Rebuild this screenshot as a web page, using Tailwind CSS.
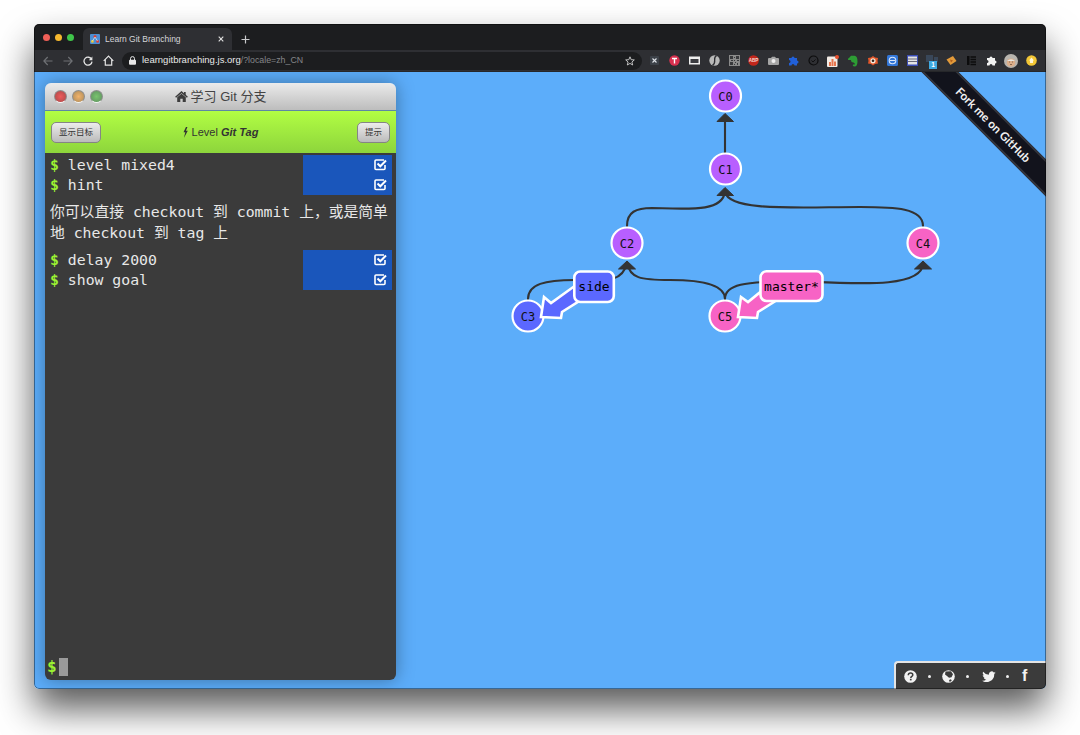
<!DOCTYPE html>
<html lang="zh">
<head>
<meta charset="UTF-8">
<title>Learn Git Branching</title>
<script src="https://cdn.jsdelivr.net/npm/@tailwindcss/browser@4"></script>
</head>
<body class="bg-white w-[1080px] h-[735px] overflow-hidden pl-[34px] pt-[24px] font-['Liberation_Sans','Noto_Sans_CJK_SC',sans-serif]">

<div class="w-[1012px] h-[665px] rounded-[5px] overflow-hidden flex flex-col relative">
  <!-- tab strip -->
  <div class="h-[26px] bg-[#1c1d1f] flex items-end shrink-0 relative">
    <div class="flex gap-[5px] pl-[9px] w-[49px] h-[25px] items-center">
      <span class="w-[7px] h-[7px] rounded-full bg-[#ee5f57] shrink-0"></span>
      <span class="w-[7px] h-[7px] rounded-full bg-[#f5b82e] shrink-0"></span>
      <span class="w-[7px] h-[7px] rounded-full bg-[#3fc54a] shrink-0"></span>
    </div>
    <div class="w-[149px] h-[22px] bg-[#2e2f33] rounded-t-[6px] flex items-center pl-[7px] pr-[8px]">
      <svg class="w-[10px] h-[10px] shrink-0" viewBox="0 0 10 10"><rect width="10" height="10" rx="1" fill="#4d8fd6"/><circle cx="5" cy="2.5" r="1.5" fill="#d8413a"/><circle cx="2.4" cy="7.4" r="1.4" fill="#e8c83a"/><circle cx="7.6" cy="7.4" r="1.4" fill="#d8413a"/><path d="M5 3 2.5 7M5 3l2.5 4" stroke="#fff" stroke-width=".6"/></svg>
      <span class="ml-[5px] text-[8.5px] text-[#d5d6d8] flex-1 whitespace-nowrap">Learn Git Branching</span>
      <svg class="w-[6px] h-[6px]" viewBox="0 0 6 6"><path d="M.7.7l4.6 4.6M5.3.7.7 5.3" stroke="#e2e2e2" stroke-width="1.1"/></svg>
    </div>
    <svg class="w-[9px] h-[9px] ml-[9px] mb-[6px]" viewBox="0 0 9 9"><path d="M4.5.5v8M.5 4.5h8" stroke="#c9cacc" stroke-width="1.2"/></svg>
  </div>

  <!-- toolbar -->
  <div class="h-[22px] bg-[#2e2f33] border-b border-b-[#26272a] flex items-center shrink-0">
    <div class="flex items-center w-[88px] pl-[9px] gap-[10px]">
      <svg class="w-[10px] h-[10px] shrink-0" viewBox="0 0 10 10" fill="none" stroke="#6e7074" stroke-width="1.2"><path d="M9.5 5H1M4.7 1 .9 5l3.8 4"/></svg>
      <svg class="w-[10px] h-[10px] shrink-0" viewBox="0 0 10 10" fill="none" stroke="#6e7074" stroke-width="1.2"><path d="M.5 5H9M5.3 1l3.8 4-3.8 4"/></svg>
      <svg class="w-[10px] h-[10px] shrink-0" viewBox="0 0 10 10" fill="none" stroke="#e4e4e4" stroke-width="1.3"><path d="M8.6 3.4A4 4 0 1 0 9 5.6"/><path d="M9.4.6v3.6H5.8z" fill="#e4e4e4" stroke="none"/></svg>
      <svg class="w-[11px] h-[11px] shrink-0" viewBox="0 0 11 11" fill="none" stroke="#e4e4e4" stroke-width="1.2"><path d="M.7 5.8 5.500 1l4.800 4.800M2.300 4.600v5.600h6.400V4.600"/></svg>
    </div>
    <div class="w-[520px] h-[18px] rounded-full bg-[#1c1d1f] flex items-center pl-[7px] pr-[7px]">
      <svg class="w-[7px] h-[9px] shrink-0" viewBox="0 0 7 9"><path d="M1.500 4V2.600a2 2 0 0 1 4 0V4" fill="none" stroke="#e6e6e6"/><rect y="3.800" width="7" height="5" rx="1" fill="#e6e6e6"/></svg>
      <span class="ml-[6px] text-[9.500px] text-[#e8e8e8] flex-1 whitespace-nowrap font-medium">learngitbranching.js.org<span class="text-[#85878a] font-normal text-[8.800px]">/?locale=zh_CN</span></span>
      <svg class="w-[10px] h-[10px] shrink-0" viewBox="0 0 10 10" fill="none" stroke="#d0d0d0" stroke-width=".9"><path d="M5 .8 6.200 3.700l3.100.2L6.900 6l.8 3L5 7.400 2.300 9l.8-3L.7 3.900l3.100-.2z"/></svg>
    </div>
    <!-- extension icons -->
    <div class="flex items-center ml-[3px]">
      <div class="w-[19.8px] flex justify-center"><svg class="w-[11px] h-[11px]" viewBox="0 0 11 11"><rect x="1" y="1" width="9" height="9" rx="1" fill="#3c4148"/><path d="M3.500 3.500l4 4M7.500 3.500l-4 4" stroke="#dfe3e8" stroke-width="1.100"/></svg></div>
      <div class="w-[19.8px] flex justify-center"><svg class="w-[11px] h-[11px]" viewBox="0 0 11 11"><circle cx="5.500" cy="5.500" r="5.200" fill="#d9304f"/><path d="M3 3.500h5M5.500 3.500v5" stroke="#fff" stroke-width="1.400"/></svg></div>
      <div class="w-[19.8px] flex justify-center"><svg class="w-[11px] h-[11px]" viewBox="0 0 11 11"><rect y="1.500" width="11" height="8" fill="#eee"/><rect x="1.500" y="4" width="8" height="4" fill="#3a3b40"/></svg></div>
      <div class="w-[19.8px] flex justify-center"><svg class="w-[11px] h-[11px]" viewBox="0 0 11 11"><circle cx="5.500" cy="5.500" r="5.200" fill="#b9b9b9"/><path d="M7.500.6C3 3 8.500 7 3.500 10.400" fill="none" stroke="#2e2f33" stroke-width="1.300"/></svg></div>
      <div class="w-[19.8px] flex justify-center"><svg class="w-[11px] h-[11px]" viewBox="0 0 11 11"><rect width="11" height="11" fill="#8a8a8a"/><path d="M1 1h3v3H1zM7 1h3v3H7zM1 7h3v3H1zM5 5h1v1H5zM6 7h1v1H6zM8 8h1v2H8zM5 2h1v1H5zM2 5h2v1H2zM8 5h2v1H8zM5 9h1v1H5z" fill="#38393c"/></svg></div>
      <div class="w-[19.8px] flex justify-center"><svg class="w-[11px] h-[11px]" viewBox="0 0 11 11"><circle cx="5.500" cy="5.500" r="5.300" fill="#c2261b"/><text x="5.500" y="7.300" text-anchor="middle" font-size="4.600" font-weight="700" fill="#f6d6d2">ABP</text></svg></div>
      <div class="w-[19.8px] flex justify-center"><svg class="w-[11px] h-[11px]" viewBox="0 0 11 11"><path d="M1 3h2l1-1.200h3L8 3h2a1 1 0 0 1 1 1v5a1 1 0 0 1-1 1H1a1 1 0 0 1-1-1V4a1 1 0 0 1 1-1z" fill="#a5a5a5"/><circle cx="5.500" cy="6" r="2" fill="#eee"/></svg></div>
      <div class="w-[19.8px] flex justify-center"><svg class="w-[11px] h-[11px]" viewBox="0 0 11 11"><path d="M1 3h2.500a1.500 1.500 0 1 1 3 0H9v2.500a1.500 1.500 0 1 1 0 3V10.500H6.500a1.500 1.500 0 0 0-3 0H1V8a1.500 1.500 0 1 0 0-3z" fill="#2160d8"/></svg></div>
      <div class="w-[19.8px] flex justify-center"><svg class="w-[11px] h-[11px]" viewBox="0 0 11 11" fill="none" stroke="#0c0c0d" stroke-width="1.200"><circle cx="5.500" cy="5.500" r="4.500"/><path d="M3.500 5.500l1.500 1.500 2.500-2.500" stroke-width=".9"/></svg></div>
      <div class="w-[19.8px] flex justify-center"><svg class="w-[12px] h-[12px]" viewBox="0 0 12 12"><rect y="1.500" width="10.500" height="10.500" rx="1" fill="#f3ece6"/><path d="M2 11V7h2v4zM4.500 11V4h2v7zM7 11V6.500h2V11z" fill="#e8764e"/><circle cx="10" cy="2" r="2" fill="#e9502f"/></svg></div>
      <div class="w-[19.8px] flex justify-center"><svg class="w-[11px] h-[12px]" viewBox="0 0 11 12"><path d="M2 3 4 .8h3.500C9.500.8 10.500 3 10.500 6.500c0 3-1 5-3 5-1.500 0-2-1-1.500-2H7.500C8 9.500 8 8 6.500 7.500 4.500 7.500 4 6.500 4 5H1.500C.8 5 .5 3.500 2 3z" fill="#2d9c34"/></svg></div>
      <div class="w-[19.8px] flex justify-center"><svg class="w-[12px] h-[11px]" viewBox="0 0 12 11"><path d="M6 1 8 2.500l3 .5-.5 3 .5 2.500-3 .5L6 10.500 4 9 1 8.500l.5-2.500L1 3l3-.5z" fill="#e4572a"/><circle cx="6" cy="5.800" r="2.600" fill="#f4e9dc"/><circle cx="6" cy="5.800" r="1.300" fill="#33261f"/></svg></div>
      <div class="w-[19.8px] flex justify-center"><svg class="w-[11px] h-[11px]" viewBox="0 0 11 11"><rect width="11" height="11" rx="1.500" fill="#3276d8"/><circle cx="5.500" cy="5.500" r="3.300" fill="none" stroke="#dbe8fb" stroke-width="1.100"/><path d="M3 5.500h5" stroke="#dbe8fb"/></svg></div>
      <div class="w-[19.8px] flex justify-center"><svg class="w-[11px] h-[11px]" viewBox="0 0 11 11"><rect width="11" height="11" fill="#3b4db5"/><rect x="1" y="1.500" width="9" height="8" fill="#e4e4e4"/><path d="M1 4h9M1 6.500h9" stroke="#6a6a78"/></svg></div>
      <div class="w-[19.8px] flex justify-center relative"><svg class="w-[12px] h-[8px] -translate-y-[2px]" viewBox="0 0 12 8"><rect width="7" height="7" fill="#394759"/><rect x="8" y="2" width="4" height="5" fill="#394759"/></svg><span class="absolute top-[4px] left-[7px] w-[8px] h-[8px] bg-[#3fa9e0] text-white text-[6.500px] leading-[8px] text-center font-bold">1</span></div>
      <div class="w-[19.8px] flex justify-center"><svg class="w-[11px] h-[11px]" viewBox="0 0 11 11"><path d="M.5 4.500 7 1l3.500 5-6 4z" fill="#e29a3a"/><path d="M4 4.500l3 1-2 2z" fill="#b35f1d"/></svg></div>
      <div class="w-[19.8px] flex justify-center"><svg class="w-[11px] h-[11px]" viewBox="0 0 11 11"><rect x="1" y="1" width="2.500" height="9" fill="#0c0c0d"/><path d="M4.500 2h5.500M4.500 4.500h5.500M4.500 7h5.500M4.500 9.500h5.500" stroke="#0c0c0d" stroke-width="1.400"/></svg></div>
      <div class="w-[19.8px] flex justify-center"><svg class="w-[11px] h-[11px]" viewBox="0 0 11 11"><path d="M1 3h2.500a1.500 1.500 0 1 1 3 0H9v2.500a1.500 1.500 0 1 1 0 3V10.500H6.500a1.500 1.500 0 0 0-3 0H1V8a1.500 1.500 0 1 0 0-3z" fill="#f2f2f2"/></svg></div>
      <div class="w-[19.8px] flex justify-center"><svg class="w-[14px] h-[14px]" viewBox="0 0 14 14"><circle cx="7" cy="7" r="7" fill="#b8b4ae"/><ellipse cx="7" cy="8.500" rx="4.200" ry="4" fill="#dcae8a"/><path d="M3 7q4-3.500 8 0" fill="#e9e6e0"/><path d="M5 8h1M8 8h1M6 10.500h2" stroke="#6b4a35" stroke-width=".7"/></svg></div>
      <div class="w-[19.8px] flex justify-center"><svg class="w-[11px] h-[11px]" viewBox="0 0 11 11"><circle cx="5.500" cy="5.500" r="5.300" fill="#f3c736"/><path d="M5.500 2.500 8 5.500H7v2.500H4V5.500H3z" fill="#fff6d8"/></svg></div>
    </div>
  </div>

  <!-- page -->
  <div class="flex-1 bg-[#5cadfa] relative overflow-hidden">

    <!-- graph -->
    <svg class="absolute inset-0 w-[1012px] h-[617px] font-['DejaVu_Sans_Mono',monospace]" viewBox="34 72 1012 617" fill="none">
      <g stroke="#333" stroke-width="2.100" stroke-linecap="round">
        <path d="M725 153V120"/>
        <path d="M627 226C627 212 636 208 652 208C690 209 722 212 725 192"/>
        <path d="M923 226C923 208 895 207 860 207C800 207 729 212 725 192"/>
        <path d="M725 299C725 284 700 280 670 280C640 280 630 278 627 263"/>
        <path d="M725 299C725 284 745 282 790 281C850 283 923 290 923 263"/>
        <path d="M528 299C528 284 545 280 575 280C600 280 622 285 627 263"/>
      </g>
      <g fill="#333" stroke="#333" stroke-linejoin="round">
        <path d="M725 113.500 733.500 121.500H717Z"/>
        <path d="M725 187.500 733.500 195.500H717Z"/>
        <path d="M627 261 635.500 269H618.500Z"/>
        <path d="M923 261 931.500 269H914.500Z"/>
      </g>

      <g stroke="#fff" stroke-width="2.200">
        <circle cx="725.500" cy="96" r="15.500" fill="#b85fff"/>
        <circle cx="725.500" cy="169" r="15.500" fill="#b85fff"/>
        <circle cx="627" cy="243" r="15.500" fill="#b85fff"/>
        <circle cx="528" cy="316" r="15.500" fill="#5b68ff"/>
        <circle cx="923" cy="243" r="15.500" fill="#f763c5"/>
        <circle cx="725" cy="316" r="15.500" fill="#f763c5"/>
      </g>
      <g fill="#111" font-size="12" text-anchor="middle">
        <text x="725.500" y="100.500">C0</text>
        <text x="725.500" y="173.500">C1</text>
        <text x="627" y="247.500">C2</text>
        <text x="528" y="320.500">C3</text>
        <text x="923" y="247.500">C4</text>
        <text x="725" y="320.500">C5</text>
      </g>

      <path d="M541 317 544 297 551 303 576 285 584 298 562 312 561 318Z" fill="#5b68ff" stroke="#fff" stroke-width="2.600"/>
      <rect x="574.300" y="271.500" width="39.500" height="30.500" rx="6" fill="#5b68ff" stroke="#fff" stroke-width="2.600"/>
      <text x="594" y="291" fill="#000" font-size="13" text-anchor="middle">side</text>

      <path d="M738 317 741 297 748 302 764 289 774 302 758 312 757 318Z" fill="#f763c5" stroke="#fff" stroke-width="2.600"/>
      <rect x="760.500" y="271.300" width="62" height="29.700" rx="6" fill="#f763c5" stroke="#fff" stroke-width="2.600"/>
      <text x="791.500" y="291" fill="#000" font-size="13" text-anchor="middle">master*</text>
    </svg>

    <!-- github ribbon -->
    <div class="absolute top-0 right-0 w-[150px] h-[150px] overflow-hidden">
      <div class="absolute top-[40px] right-[-57px] w-[220px] h-[26px] rotate-45 bg-[#12131c] border-y-2 border-y-[#33343b] flex items-center justify-center text-[#f0f0f0] text-[11.800px] font-bold font-['Lato',sans-serif] whitespace-nowrap">Fork me on GitHub</div>
    </div>

    <!-- command panel -->
    <div class="relative m-[11px] w-[351px] h-[597px] rounded-[6px] flex flex-col shadow-[0_0_18px_rgba(0,0,0,0.35)] overflow-hidden">
      <div class="h-[28px] shrink-0 bg-gradient-to-b from-[#ebebeb] to-[#bdbdbd] border-b border-b-[#5e87a5] flex items-center relative">
        <div class="flex gap-[5px] pl-[9px]">
          <span class="w-[13px] h-[13px] rounded-full bg-radial from-[#ee5a5a] to-[#a84a4a] border border-[#8d8d8d] border-b-[#f4f4f4]"></span>
          <span class="w-[13px] h-[13px] rounded-full bg-radial from-[#f2b26a] to-[#a98a5a] border border-[#8d8d8d] border-b-[#f4f4f4]"></span>
          <span class="w-[13px] h-[13px] rounded-full bg-radial from-[#79c46e] to-[#5f8f5f] border border-[#8d8d8d] border-b-[#f4f4f4]"></span>
        </div>
        <div class="absolute inset-0 flex items-center justify-center gap-[3px] text-[13px] text-[#444]">
          <svg class="w-[13px] h-[11px]" viewBox="0 0 13 11"><path d="M.6 6.200 6.500 1.100l5.900 5.100" fill="none" stroke="#3d3d3d" stroke-width="1.500"/><path d="M2.200 6.300 6.500 2.800l4.300 3.500V11H7.700V7.800H5.300V11H2.200z" fill="#3d3d3d"/><rect x="9" y="1" width="1.700" height="3" fill="#3d3d3d"/></svg>
          <span>学习 Git 分支</span>
        </div>
      </div>
      <div class="h-[42px] shrink-0 bg-gradient-to-b from-[#b2fe43] to-[#8dd53c] flex items-center justify-between pl-[6px] pr-[6px] relative">
        <button class="w-[50px] h-[21px] rounded-[5px] border-[1.500px] border-[#858585] bg-gradient-to-b from-[#ececec] to-[#bbb] text-[8.500px] text-[#333]">显示目标</button>
        <div class="absolute inset-0 flex items-center justify-center text-[11px] text-[#333]">
          <svg class="w-[5px] h-[11px] mr-[4px]" viewBox="0 0 5 11"><path d="M3-.1.500 5.300H2.300L.9 10.900 4.800 3.800H2.900L4.500-.1z" fill="#333"/></svg>
          <span>Level&nbsp;<b class="italic">Git Tag</b></span>
        </div>
        <button class="w-[33px] h-[21px] rounded-[5px] border-[1.500px] border-[#858585] bg-gradient-to-b from-[#ececec] to-[#bbb] text-[8.500px] text-[#333] relative">提示</button>
      </div>
      <div class="flex-1 bg-[#3b3b3b] pt-[2px] pl-[5px] pr-[4px] pb-[4px] flex flex-col text-[14.800px] text-[#e8e8e8] font-['DejaVu_Sans_Mono','Noto_Sans_CJK_SC',monospace]">
        <div class="flex h-[20px] leading-[20px]">
          <span class="flex-1"><span class="text-[#9cf232] font-bold mr-[8.900px]">$</span>level mixed4</span>
          <span class="w-[89px] bg-[#1a56bb] flex items-center justify-end pr-[5px]">
            <svg class="w-[13px] h-[13px] -translate-y-[1px]" viewBox="0 0 13 13" fill="none" stroke="#fff"><path d="M11 7v3.500a1 1 0 0 1-1 1H2a1 1 0 0 1-1-1V3a1 1 0 0 1 1-1h8" stroke-width="1.600"/><path d="M3.500 5.500 6.300 8.300 12 2.500" stroke-width="2"/></svg>
          </span>
        </div>
        <div class="flex h-[20px] leading-[20px]">
          <span class="flex-1"><span class="text-[#9cf232] font-bold mr-[8.900px]">$</span>hint</span>
          <span class="w-[89px] bg-[#1a56bb] flex items-center justify-end pr-[5px]">
            <svg class="w-[13px] h-[13px] -translate-y-[1px]" viewBox="0 0 13 13" fill="none" stroke="#fff"><path d="M11 7v3.500a1 1 0 0 1-1 1H2a1 1 0 0 1-1-1V3a1 1 0 0 1 1-1h8" stroke-width="1.600"/><path d="M3.500 5.500 6.300 8.300 12 2.500" stroke-width="2"/></svg>
          </span>
        </div>
        <p class="mt-[6px] mb-[7px] leading-[21px]">你可以直接 checkout 到 commit 上，或是简单地 checkout 到 tag 上</p>
        <div class="flex h-[20px] leading-[20px]">
          <span class="flex-1"><span class="text-[#9cf232] font-bold mr-[8.900px]">$</span>delay 2000</span>
          <span class="w-[89px] bg-[#1a56bb] flex items-center justify-end pr-[5px]">
            <svg class="w-[13px] h-[13px] -translate-y-[1px]" viewBox="0 0 13 13" fill="none" stroke="#fff"><path d="M11 7v3.500a1 1 0 0 1-1 1H2a1 1 0 0 1-1-1V3a1 1 0 0 1 1-1h8" stroke-width="1.600"/><path d="M3.500 5.500 6.300 8.300 12 2.500" stroke-width="2"/></svg>
          </span>
        </div>
        <div class="flex h-[20px] leading-[20px]">
          <span class="flex-1"><span class="text-[#9cf232] font-bold mr-[8.900px]">$</span>show goal</span>
          <span class="w-[89px] bg-[#1a56bb] flex items-center justify-end pr-[5px]">
            <svg class="w-[13px] h-[13px] -translate-y-[1px]" viewBox="0 0 13 13" fill="none" stroke="#fff"><path d="M11 7v3.500a1 1 0 0 1-1 1H2a1 1 0 0 1-1-1V3a1 1 0 0 1 1-1h8" stroke-width="1.600"/><path d="M3.500 5.500 6.300 8.300 12 2.500" stroke-width="2"/></svg>
          </span>
        </div>
        <div class="mt-auto flex items-center gap-[2px] -ml-[3px]">
          <span class="text-[#9cf232] font-bold text-[16px] leading-[18px]">$</span>
          <span class="w-[9px] h-[18px] bg-[#9a9a9a]"></span>
        </div>
      </div>
    </div>

    <!-- bottom right links -->
    <div class="absolute right-0 bottom-0 w-[152px] h-[28px] bg-[#3b3b3b] border-t-2 border-l-2 border-[#e4e4e4] rounded-tl-[4px] flex items-center pl-[8px] text-white">
      <svg class="w-[13px] h-[13px] shrink-0" viewBox="0 0 13 13"><circle cx="6.500" cy="6.500" r="6.300" fill="#f2f2f2"/><path d="M4.300 5.200C4.300 3.800 5.300 3 6.600 3c1.300 0 2.200.8 2.200 1.900 0 1.500-2 1.600-2 3" fill="none" stroke="#3b3b3b" stroke-width="1.500"/><rect x="5.900" y="8.800" width="1.700" height="1.600" fill="#3b3b3b"/></svg>
      <span class="w-[3px] h-[3px] rounded-full bg-[#eee] ml-[11px] mr-[11px] shrink-0"></span>
      <svg class="w-[13px] h-[13px] shrink-0" viewBox="0 0 13 13"><circle cx="6.500" cy="6.500" r="6.300" fill="#f2f2f2"/><path d="M3.500 1.500 9 1.200l2 3-1.500 3-2.500.5L5 6 3 4.500zM7 10l2-.7.7 1.500-2 1.200z" fill="#3b3b3b"/></svg>
      <span class="w-[3px] h-[3px] rounded-full bg-[#eee] ml-[11px] mr-[13px] shrink-0"></span>
      <svg class="w-[14px] h-[11px] shrink-0" viewBox="0 0 15 12"><path d="M15 1.900c-.5.300-1.100.400-1.700.500.600-.400 1.100-.9 1.300-1.600-.6.300-1.200.600-1.900.7A3 3 0 0 0 7.500 4.200 8.600 8.600 0 0 1 1.200.7a3 3 0 0 0 .9 4c-.5 0-1-.1-1.400-.4 0 1.500 1 2.700 2.400 3-.4.100-.9.100-1.300 0 .4 1.200 1.500 2.100 2.800 2.100A6 6 0 0 1 0 10.700a8.500 8.500 0 0 0 13.200-7.500c.7-.4 1.300-.9 1.800-1.300z" fill="#f2f2f2"/></svg>
      <span class="w-[3px] h-[3px] rounded-full bg-[#eee] ml-[10px] mr-[13px] shrink-0"></span>
      <span class="text-[16px] leading-[16px] font-bold text-[#f2f2f2]">f</span>
    </div>
  </div>

  <div class="absolute inset-0 rounded-[5px] border border-black/40 pointer-events-none"></div>
</div>
<div class="absolute left-[34px] top-[24px] w-[1012px] h-[665px] rounded-[5px] -z-10 shadow-[0_20px_36px_rgba(0,0,0,0.65)]"></div>

</body>
</html>
